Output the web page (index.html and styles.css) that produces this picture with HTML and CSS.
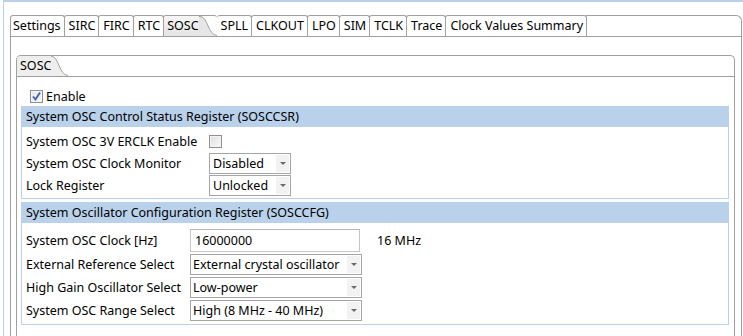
FILE: index.html
```html
<!DOCTYPE html>
<html>
<head>
<meta charset="utf-8">
<link rel="stylesheet" href="styles.css">
</head>
<body>
<div class="frame">
  <div class="outer">
    <div class="tabs">
      <div class="tab">Settings</div>
      <div class="tab">SIRC</div>
      <div class="tab">FIRC</div>
      <div class="tab">RTC</div>
      <div class="tab tab-sel"><span class="sel-label">SOSC</span><svg class="curve" width="18" height="20" viewBox="0 0 18 20"><path d="M0,0 L1,0 C9,0 9,20 18,20 L0,20 Z" fill="#e9e9e9"/><path d="M0,0.5 L1,0.5 C9,0.5 9,19.5 18,19.5" fill="none" stroke="#a0a0a0" stroke-width="1"/></svg></div>
      <div class="tab tab-after">SPLL</div>
      <div class="tab">CLKOUT</div>
      <div class="tab">LPO</div>
      <div class="tab">SIM</div>
      <div class="tab">TCLK</div>
      <div class="tab">Trace</div>
      <div class="tab">Clock Values Summary</div>
      <div class="tabs-fill"></div>
    </div>
    <div class="outer-body">
      <div class="inner">
        <div class="inner-head">
          <span class="inner-label">SOSC</span><svg class="curve" width="17" height="20" viewBox="0 0 17 20"><path d="M0,0 C8,0 8,20 17,20 L0,20 Z" fill="#eeeeee"/><path d="M0,0 C8,0 8,19.5 17,19.5" fill="none" stroke="#a0a0a0" stroke-width="1"/></svg>
        </div>
        <div class="inner-body">
          <div class="enable-row">
            <span class="cb checked"><svg width="11" height="11" viewBox="0 0 11 11"><path d="M2,5.5 L4.5,8.5 L9,1.5" fill="none" stroke="#3d5ea8" stroke-width="1.8"/></svg></span>
            <span>Enable</span>
          </div>

          <div class="section">
            <div class="sec-head">System OSC Control Status Register (SOSCCSR)</div>
            <div class="sec-body grid-a">
              <div class="lbl">System OSC 3V ERCLK Enable</div>
              <div class="ctl"><span class="cb"></span></div>
              <div class="lbl">System OSC Clock Monitor</div>
              <div class="ctl"><div class="select w82"><span class="sv">Disabled</span><span class="arrow"><i></i></span></div></div>
              <div class="lbl">Lock Register</div>
              <div class="ctl"><div class="select w82"><span class="sv">Unlocked</span><span class="arrow"><i></i></span></div></div>
            </div>
          </div>

          <div class="section">
            <div class="sec-head">System Oscillator Configuration Register (SOSCCFG)</div>
            <div class="sec-body grid-b">
              <div class="lbl">System OSC Clock [Hz]</div>
              <div class="ctl"><div class="input">16000000</div><span class="unit">16 MHz</span></div>
              <div class="lbl">External Reference Select</div>
              <div class="ctl"><div class="select w172"><span class="sv">External crystal oscillator</span><span class="arrow"><i></i></span></div></div>
              <div class="lbl">High Gain Oscillator Select</div>
              <div class="ctl"><div class="select w172"><span class="sv">Low-power</span><span class="arrow"><i></i></span></div></div>
              <div class="lbl">System OSC Range Select</div>
              <div class="ctl"><div class="select w172"><span class="sv">High (8 MHz - 40 MHz)</span><span class="arrow"><i></i></span></div></div>
            </div>
          </div>
        </div>
      </div>
    </div>
  </div>
</div>
</body>
</html>
```

FILE: styles.css
```css
html, body {
  margin: 0;
  padding: 0;
  background: #ffffff;
  overflow: hidden;
}
body {
  width: 743px;
  height: 336px;
  font-family: "Noto Sans", "Liberation Sans", sans-serif;
  font-size: 12.5px;
  color: #000000;
}
.frame {
  box-sizing: border-box;
  margin-left: 3px;
  height: 336px;
  border-top: 2px solid #b9d1ea;
  border-left: 1px solid #b9d1ea;
  padding: 13px 0 0 6px;
}
.outer {
  width: 732px;
  height: 321px;
  display: flex;
  flex-direction: column;
}
.tabs {
  display: flex;
  height: 21px;
  flex: none;
}
.tab {
  box-sizing: border-box;
  height: 21px;
  border: 1px solid #a0a0a0;
  border-bottom: none;
  border-radius: 3px 3px 0 0;
  padding: 0 3px 0 4px;
  line-height: 20px;
  margin-right: -1px;
  background: #ffffff;
  white-space: nowrap;
}
.tab:first-child {
  padding-left: 2px;
}
.tab-sel {
  display: flex;
  padding: 0;
  border-right: none;
  background: transparent;
  margin-right: 0;
  position: relative;
  z-index: 1;
}
.sel-label {
  padding-left: 3px;
  background: linear-gradient(#f6f6f6, #e4e4e4);
  border-top-left-radius: 2px;
}
.curve {
  display: block;
  flex: none;
}
.tab-sel .curve path:first-child {
  fill: #e6e6e6;
}
.tab-after {
  border-left: none;
}
.tabs-fill {
  flex: 1;
  border-top: 1px solid #a0a0a0;
  border-right: 1px solid #a0a0a0;
  border-top-right-radius: 6px;
}
.outer-body {
  flex: 1;
  border: 1px solid #a0a0a0;
  border-bottom: none;
  padding: 18px 6px 0 5px;
  display: flex;
  flex-direction: column;
}
.inner {
  flex: 1;
  border: 1px solid #a0a0a0;
  border-bottom: none;
  border-radius: 5px 5px 0 0;
  display: flex;
  flex-direction: column;
}
.inner-head {
  height: 20px;
  border-bottom: 1px solid #a0a0a0;
  display: flex;
  flex: none;
}
.inner-label {
  padding-left: 3px;
  line-height: 20px;
  background: #eeeeee;
  border-top-left-radius: 4px;
}
.inner-body {
  padding: 11px 5px 0 4px;
}
.enable-row {
  height: 16px;
  margin-bottom: 2px;
  padding-left: 9px;
  display: flex;
  align-items: center;
  gap: 3px;
}
.cb {
  box-sizing: border-box;
  width: 13px;
  height: 13px;
  border: 1px solid #8e8f8f;
  background: linear-gradient(135deg, #dcdcdc, #fbfbfb);
  box-shadow: inset 0 0 0 1px #f4f4f4;
  display: inline-flex;
  align-items: center;
  justify-content: center;
}
.cb.checked {
  background: linear-gradient(135deg, #e4e4e4, #fafafa);
}
.section {
  border: 1px solid #b9d1ea;
  margin-bottom: 3px;
}
.sec-head {
  background: #b9d1ea;
  height: 20px;
  line-height: 20px;
  padding-left: 4px;
}
.sec-body {
  display: grid;
  padding-left: 4px;
  align-items: center;
}
.grid-a {
  grid-template-columns: 183px 1fr;
  grid-auto-rows: 21px;
  row-gap: 1px;
  padding-top: 4px;
  padding-bottom: 2px;
}
.grid-b {
  grid-template-columns: 164px 1fr;
  grid-template-rows: 23px 21px 21px 21px;
  row-gap: 2px;
  padding-top: 6px;
  padding-bottom: 3px;
}
.lbl {
  white-space: nowrap;
}
.ctl {
  display: flex;
  align-items: center;
  height: 100%;
}
.select {
  box-sizing: border-box;
  height: 21px;
  border: 1px solid #a5a5a5;
  background: #ffffff;
  display: flex;
  align-items: stretch;
  padding: 1px;
}
.w82 { width: 82px; }
.w172 { width: 172px; }
.w82 .sv { padding-left: 2px; }
.sv {
  flex: 1;
  line-height: 17px;
  padding-left: 1px;
  white-space: nowrap;
  overflow: hidden;
}
.arrow {
  width: 13px;
  background: #f2f2f2;
  display: flex;
  align-items: center;
  justify-content: center;
}
.arrow i {
  width: 0;
  height: 0;
  border-left: 3px solid transparent;
  border-right: 3px solid transparent;
  border-top: 3px solid #6a6a6a;
}
.input {
  box-sizing: border-box;
  width: 170px;
  height: 23px;
  border: 1px solid #c6c6c6;
  border-top-color: #b4b4b4;
  padding-left: 4px;
  line-height: 21px;
}
.unit {
  margin-left: 17px;
}
```
